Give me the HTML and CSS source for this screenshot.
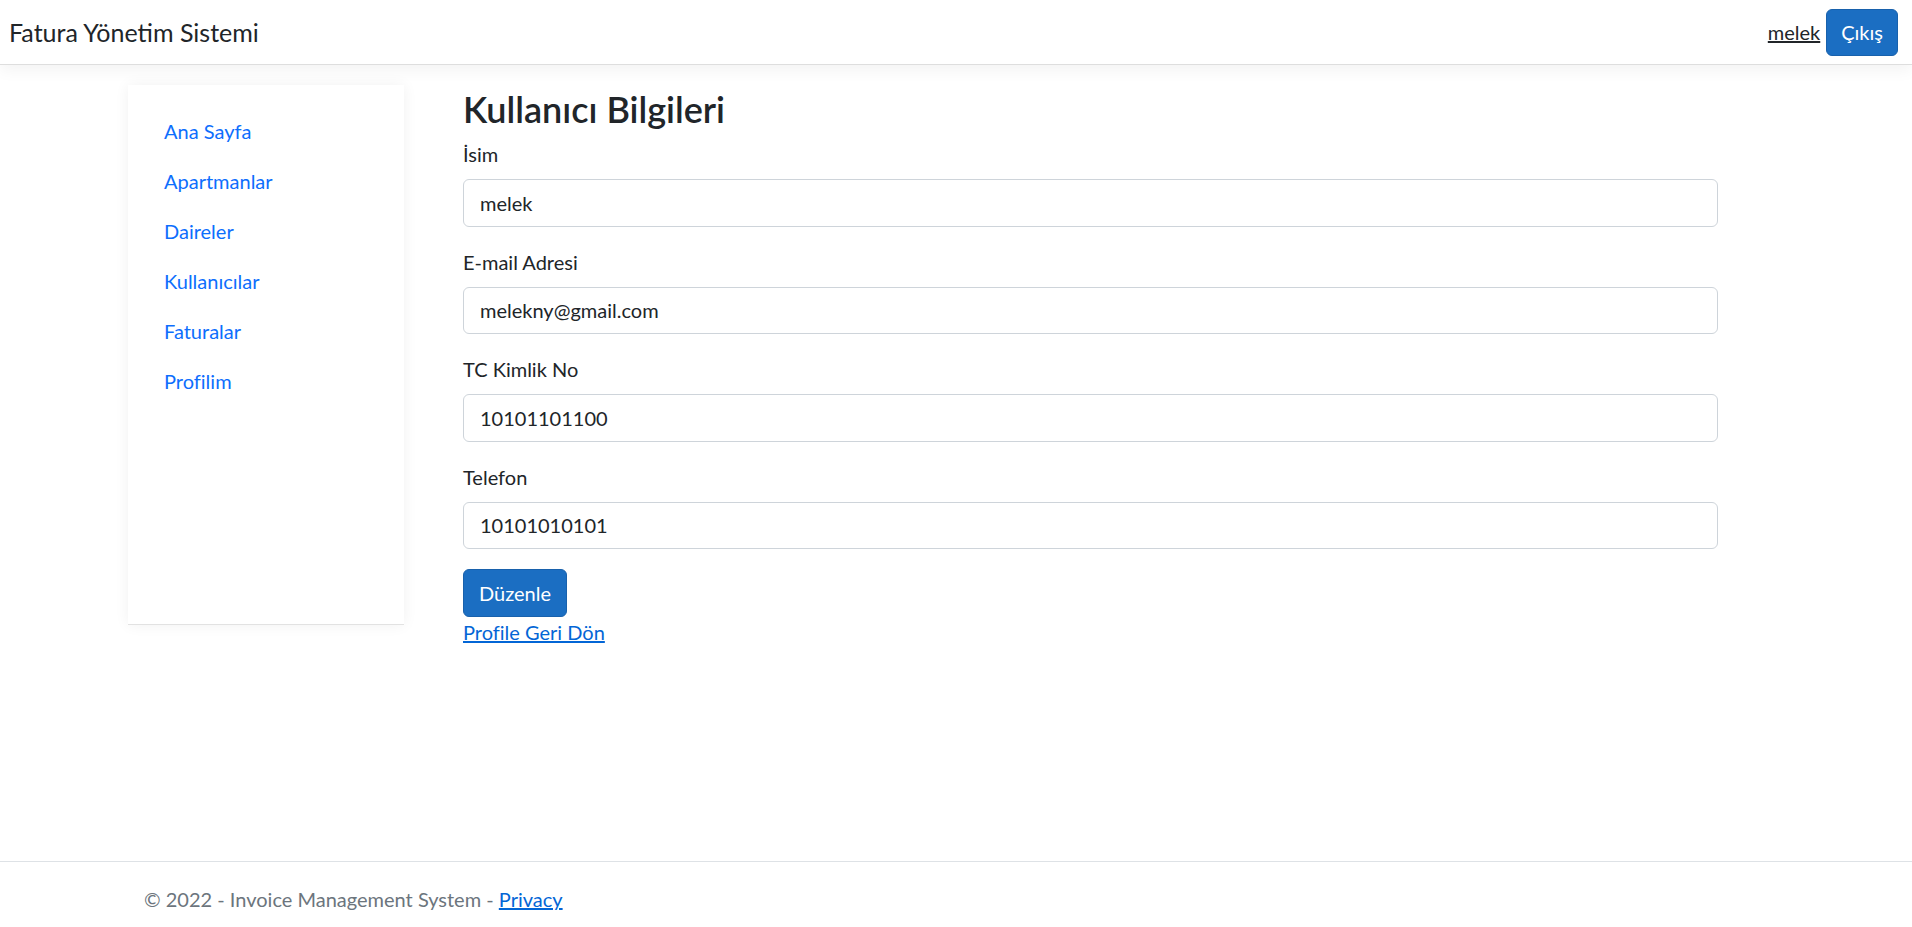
FILE: index.html
```html
<!DOCTYPE html>
<html lang="tr">
<head>
<meta charset="utf-8">
<title>Fatura Yönetim Sistemi</title>
<link rel="stylesheet" href="styles.css">
</head>
<body>
<div class="page">
  <header class="navbar">
    <a class="brand" href="#">Fatura Yönetim Sistemi</a>
    <div class="nav-right">
      <a class="user-link" href="#">melek</a>
      <button class="btn btn-primary btn-logout" type="button">Çıkış</button>
    </div>
  </header>

  <div class="layout">
    <aside class="side-card">
      <nav class="side-nav">
        <a class="side-link" href="#">Ana Sayfa</a>
        <a class="side-link" href="#">Apartmanlar</a>
        <a class="side-link" href="#">Daireler</a>
        <a class="side-link" href="#">Kullanıcılar</a>
        <a class="side-link" href="#">Faturalar</a>
        <a class="side-link" href="#">Profilim</a>
      </nav>
    </aside>

    <main class="content">
      <h2 class="title">Kullanıcı Bilgileri</h2>
      <form class="user-form">
        <div class="form-group">
          <label class="form-label">İsim</label>
          <input class="form-control" type="text" value="melek">
        </div>
        <div class="form-group">
          <label class="form-label">E-mail Adresi</label>
          <input class="form-control" type="text" value="melekny@gmail.com">
        </div>
        <div class="form-group">
          <label class="form-label">TC Kimlik No</label>
          <input class="form-control" type="text" value="10101101100">
        </div>
        <div class="form-group">
          <label class="form-label">Telefon</label>
          <input class="form-control" type="text" value="10101010101">
        </div>
        <button class="btn btn-primary btn-edit" type="button">Düzenle</button>
      </form>
      <a class="back-link" href="#">Profile Geri Dön</a>
    </main>
  </div>

  <footer class="footer">
    <div class="footer-inner">© 2022 - Invoice Management System - <a class="footer-link" href="#">Privacy</a></div>
  </footer>
</div>
</body>
</html>
```

FILE: styles.css
```css
* { box-sizing: border-box; }

html, body {
  margin: 0;
  padding: 0;
}

body {
  font-family: Lato, "Noto Sans", "Liberation Sans", sans-serif;
  font-size: 20px;
  line-height: 30px;
  color: #212529;
  background: #fff;
  overflow: hidden;
}

.page {
  min-height: 927px;
  display: flex;
  flex-direction: column;
}

/* Header */
.navbar {
  height: 65px;
  display: flex;
  align-items: center;
  justify-content: space-between;
  padding: 0 14px 0 9px;
  background: #fff;
  border-bottom: 1px solid #dedede;
  box-shadow: 0 5px 15px rgba(0, 0, 0, 0.05);
  position: relative;
  z-index: 2;
}

.brand {
  font-size: 25px;
  line-height: 38px;
  color: #212529;
  text-decoration: none;
}

.nav-right {
  display: flex;
  align-items: center;
  gap: 6px;
}

.user-link {
  color: #212529;
  text-decoration: underline;
  font-size: 20px;
}

.btn {
  font-family: inherit;
  font-size: 20px;
  line-height: 30px;
  border-radius: 6px;
  border: 1px solid transparent;
  cursor: pointer;
}

.btn-primary {
  background: #1b6ec2;
  border-color: #1861ac;
  color: #fff;
}

.btn-logout {
  height: 47px;
  padding: 0 14px;
}

/* Layout */
.layout {
  display: flex;
  align-items: flex-start;
  padding-left: 128px;
  gap: 59px;
  margin-top: 20px;
  flex: 1;
}

.side-card {
  width: 276px;
  height: 540px;
  flex: none;
  background: #fff;
  border-bottom: 1px solid #e2e2e2;
  box-shadow: 0 0 14px rgba(0, 0, 0, 0.06);
  padding: 21px 16px;
}

.side-nav {
  display: flex;
  flex-direction: column;
}

.side-link {
  display: block;
  padding: 10px 20px;
  line-height: 30px;
  color: #0d6efd;
  text-decoration: none;
}

/* Main */
.content {
  width: 1255px;
  flex: none;
}

.title {
  margin: 0 0 6px;
  font-size: 36px;
  line-height: 48px;
  font-weight: 600;
  color: #212529;
}

.form-group {
  margin-bottom: 20px;
}

.form-label {
  display: block;
  margin-bottom: 10px;
  line-height: 30px;
}

.form-control {
  display: block;
  width: 100%;
  height: 47.5px;
  padding: 0 16px;
  font-family: inherit;
  font-size: 20px;
  color: #212529;
  background: #fff;
  border: 1px solid #ced4da;
  border-radius: 6px;
  outline: none;
}

.btn-edit {
  height: 47.5px;
  width: 104px;
  padding: 0;
  display: block;
}

.back-link {
  display: inline-block;
  color: #0366d6;
  text-decoration: underline;
  line-height: 30px;
}

/* Footer */
.footer {
  height: 66px;
  border-top: 1px solid #dee2e6;
  line-height: 75px;
  white-space: nowrap;
  color: #6c757d;
}

.footer-inner {
  padding-left: 144px;
}

.footer-link {
  color: #0366d6;
  text-decoration: underline;
}
```
